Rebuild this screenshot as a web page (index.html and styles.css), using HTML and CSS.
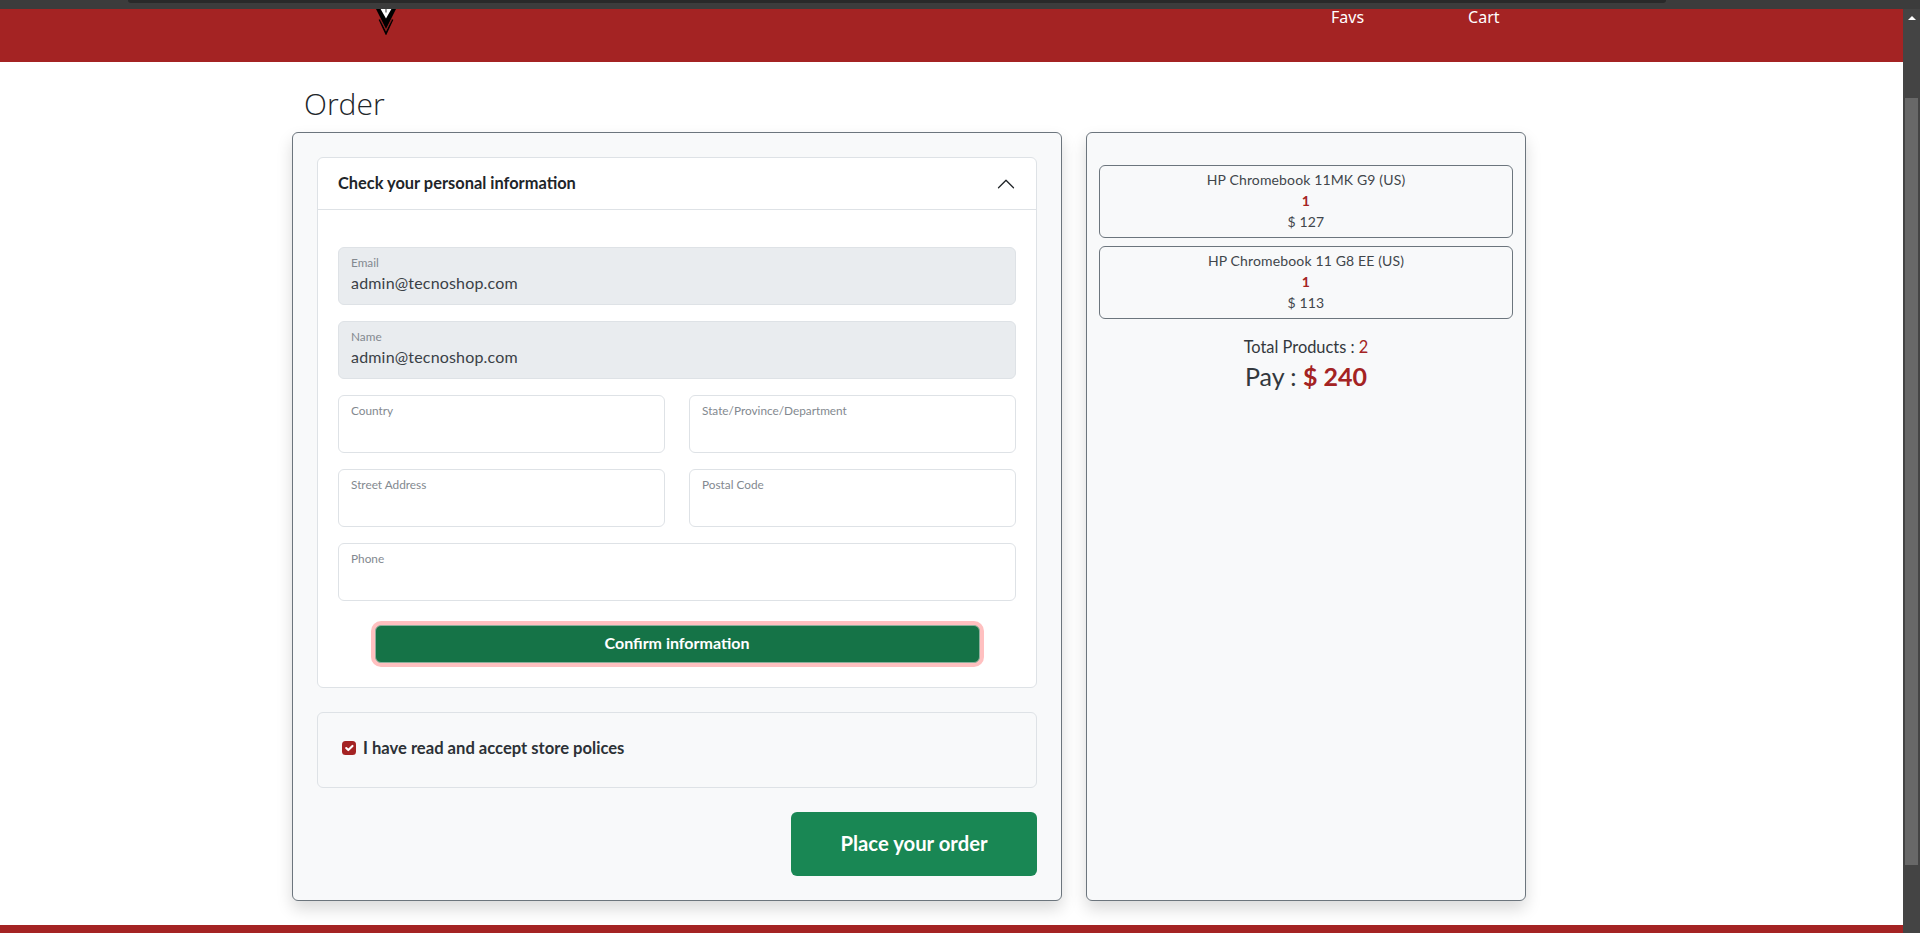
FILE: index.html
```html
<!DOCTYPE html>
<html lang="en">
<head>
<meta charset="utf-8">
<title>Order</title>
<link rel="stylesheet" href="styles.css">
</head>
<body>
<div class="browser-bar"><div class="browser-strip"></div></div>
<div class="viewport">
  <div class="page">
    <header class="site-header">
      <svg class="logo" viewBox="0 0 20 26" aria-hidden="true">
        <path d="M0 0H20L10 20Z" fill="#000"/>
        <path d="M4.6 0H9.6V3.5L10.4 3.5V0H15.4L10 9.5Z" fill="#fff"/>
        <path d="M3.4 10.5L10 24.6L16.6 10.5" fill="none" stroke="#000" stroke-width="1.7"/>
        <path d="M4.2 10.8L10 21L15.8 10.8" fill="none" stroke="#7a1a1a" stroke-width=".7"/>
      </svg>
      <nav class="site-nav">
        <a class="nav-link">Favs</a>
        <a class="nav-link">Cart</a>
      </nav>
    </header>
    <main class="content">
      <h1 class="title">Order</h1>
      <div class="columns">
        <section class="card card-form">
          <div class="accordion">
            <div class="accordion-head">
              <span>Check your personal information</span>
              <svg class="chevron" viewBox="0 0 16 16" aria-hidden="true"><path fill="#212529" fill-rule="evenodd" d="M1.646 4.646a.5.5 0 0 1 .708 0L8 10.293l5.646-5.647a.5.5 0 0 1 .708.708l-6 6a.5.5 0 0 1-.708 0l-6-6a.5.5 0 0 1 0-.708z"/></svg>
            </div>
            <div class="accordion-body">
              <label class="field field-disabled field-wide"><span class="field-label">Email</span><span class="field-value">admin@tecnoshop.com</span></label>
              <label class="field field-disabled field-wide"><span class="field-label">Name</span><span class="field-value">admin@tecnoshop.com</span></label>
              <label class="field"><span class="field-label">Country</span></label>
              <label class="field"><span class="field-label">State/Province/Department</span></label>
              <label class="field"><span class="field-label">Street Address</span></label>
              <label class="field"><span class="field-label">Postal Code</span></label>
              <label class="field field-wide"><span class="field-label">Phone</span></label>
              <button class="btn-confirm" type="button">Confirm information</button>
            </div>
          </div>
          <div class="policy">
            <span class="checkbox"><svg viewBox="0 0 20 20" aria-hidden="true"><path d="M6 10l3 3l6-6" fill="none" stroke="#fff" stroke-width="3" stroke-linecap="round" stroke-linejoin="round"/></svg></span>
            <span>I have read and accept store polices</span>
          </div>
          <div class="actions"><button class="btn-order" type="button">Place your order</button></div>
        </section>
        <aside class="card card-summary">
          <div class="item">
            <div>HP Chromebook 11MK G9 (US)</div>
            <div class="item-qty">1</div>
            <div>$ 127</div>
          </div>
          <div class="item">
            <div>HP Chromebook 11 G8 EE (US)</div>
            <div class="item-qty">1</div>
            <div>$ 113</div>
          </div>
          <p class="total">Total Products : <span class="accent">2</span></p>
          <p class="pay">Pay : <strong class="accent">$ 240</strong></p>
        </aside>
      </div>
    </main>
    <footer class="site-footer"></footer>
  </div>
  <div class="scrollbar">
    <div class="scroll-arrow"></div>
    <div class="scroll-thumb"></div>
  </div>
</div>
</body>
</html>
```

FILE: styles.css
```css
* { box-sizing: border-box; }
html, body { margin: 0; height: 933px; overflow: hidden; }
body {
  font-family: Lato, "Noto Sans", sans-serif;
  color: #212529;
  background: #fff;
  display: flex;
  flex-direction: column;
}
.browser-bar { height: 9px; background: #3c3c3c; padding: 0 254px 0 128px; flex: none; position: relative; z-index: 1; }
.browser-strip { height: 3px; background: #292929; border-radius: 0 0 6px 6px; }
.viewport { flex: 1; display: flex; min-height: 0; }
.page { flex: 1; min-width: 0; display: flex; flex-direction: column; }

.site-header {
  height: 53px; flex: none; background: #a42323;
  display: flex; align-items: flex-start;
  padding-left: 376px;
}
.logo { width: 20px; height: 26px; display: block; flex: none; }
.site-nav { margin-left: 935px; display: flex; gap: 104px; }
.nav-link { font-family: "Noto Sans", sans-serif; font-size: 16px; line-height: 17px; color: #fff; }

.content { flex: 1; padding-left: 292px; }
.title {
  margin: 0; height: 70px; padding: 21px 0 0 12px;
  font-family: "Open Sans", sans-serif; font-weight: 300; font-size: 30px; line-height: 42px; color: #212529;
}
.columns { display: flex; gap: 24px; align-items: stretch; }
.card {
  height: 769px; background: #f8f9fa; border: 1px solid #6c757d; border-radius: 6px;
  box-shadow: 0 8px 16px rgba(0,0,0,.15);
}
.card-form { width: 770px; padding: 24px; }
.card-summary { width: 440px; padding: 32px 12px 0; text-align: center; }

.accordion { background: #fff; border: 1px solid #dee2e6; border-radius: 6px; height: 531px; }
.accordion-head {
  height: 52px; padding: 0 20px 2px 20px; border-bottom: 1px solid #dee2e6;
  display: flex; align-items: center; justify-content: space-between;
  font-size: 16.4px; font-weight: 700; color: #212529;
}
.chevron { width: 20px; height: 20px; transform: rotate(180deg); margin-top: 2px; }
.accordion-body {
  padding: 37px 20px 24px;
  display: grid; grid-template-columns: 327px 327px; column-gap: 24px; row-gap: 16px;
}
.field {
  height: 58px; display: block; background: #fff; border: 1px solid #dee2e6; border-radius: 6px;
  padding: 8px 12px 0;
}
.field-wide { grid-column: 1 / -1; }
.field-disabled { background: #e9ecef; }
.field-label { display: block; font-size: 11.8px; line-height: 14px; color: #83898f; }
.field-value { display: block; margin-top: 3px; font-size: 16px; letter-spacing: .18px; line-height: 20px; color: #3a4046; }
.btn-confirm {
  grid-column: 1 / -1; justify-self: center; width: 605px; height: 38px; margin-top: 8px; padding: 0 0 3px;
  background: #157347; color: #fff; border: 1px solid #8fae9c; border-radius: 6px;
  box-shadow: 0 0 0 4px #ffc0c0;
  font-family: inherit; font-size: 16px; font-weight: 700;
}

.policy {
  height: 76px; margin-top: 24px; padding: 0 0 4px 24px; border: 1px solid #dee2e6; border-radius: 6px;
  display: flex; align-items: center; gap: 7px; font-size: 16.6px; font-weight: 700; color: #2c3136;
}
.checkbox { width: 14px; height: 14px; background: #a42323; border-radius: 3.5px; flex: none; display: block; }
.checkbox svg { display: block; width: 14px; height: 14px; }

.actions { margin-top: 24px; display: flex; justify-content: flex-end; }
.btn-order {
  width: 246px; height: 64px; padding: 0 0 3px; background: #198754; color: #fff; border: 0; border-radius: 6px;
  font-family: inherit; font-size: 20.3px; font-weight: 700;
}

.item {
  height: 73px; margin-bottom: 8px; border: 1px solid #6c757d; border-radius: 6px;
  padding: 3px 0; font-size: 14px; letter-spacing: .14px; line-height: 21px; color: #41464b;
}
.item-qty { color: #a42323; font-weight: 700; }
.total { margin: 16px 0 0; font-size: 16.4px; line-height: 24px; color: #33383d; }
.pay { margin: 2px 0 0; font-size: 25px; line-height: 30px; color: #33383d; }
.pay strong { font-weight: 700; }
.accent { color: #a42323; }

.site-footer { height: 8px; flex: none; background: #a42323; }

.scrollbar { width: 17px; flex: none; background: #444; position: relative; }
.scroll-arrow {
  position: absolute; left: 5px; top: 7px; width: 0; height: 0;
  border-left: 4px solid transparent; border-right: 4px solid transparent; border-bottom: 4px solid #fff;
}
.scroll-thumb { position: absolute; left: 2px; right: 2px; top: 89px; height: 767px; background: #686868; }
```
